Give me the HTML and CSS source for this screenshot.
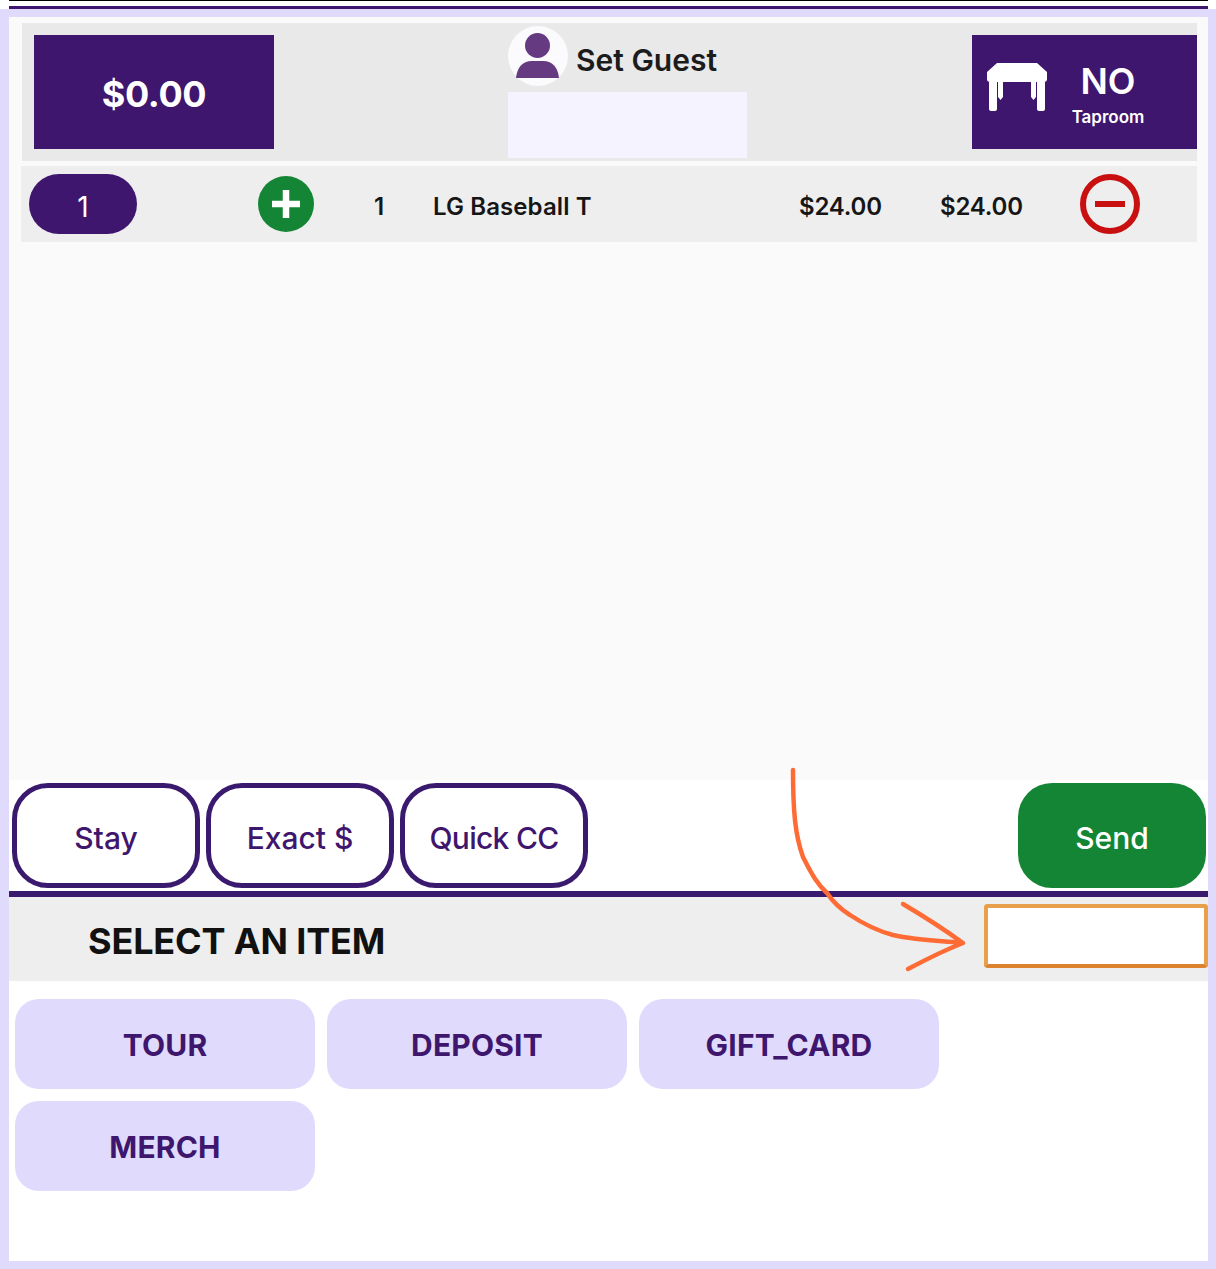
FILE: index.html
```html
<!DOCTYPE html>
<html lang="en">
<head>
<meta charset="utf-8">
<title>Order</title>
<link rel="stylesheet" href="styles.css">
</head>
<body>
<div class="top-strip"><div class="hair"></div><div class="rule"></div></div>
<main class="frame">
  <section class="order">
    <header class="head">
      <div class="total">$0.00</div>
      <div class="guest">
        <div class="guest-top">
          <svg class="avatar" viewBox="0 0 60 60"><circle cx="30" cy="30" r="30" fill="#fbfafc"/><ellipse cx="29.5" cy="19.5" rx="12.5" ry="12.5" fill="#653a80"/><path d="M8 52C9 42 14 35 24 35h11c10 0 15 7 16 17z" fill="#653a80"/></svg>
          <span class="guest-label">Set Guest</span>
        </div>
        <div class="guest-input"></div>
      </div>
      <div class="table-box">
        <svg class="table-icon" viewBox="0 0 60 48"><path d="M10 0h40l10 9v7q0 3-3 3H3q-3 0-3-3V9z" fill="#fff"/><path d="M2 19h8v27a2 2 0 0 1-2 2H4a2 2 0 0 1-2-2zM50 19h8v27a2 2 0 0 1-2 2h-4a2 2 0 0 1-2-2z" fill="#fff"/><path d="M11 19h5v15l-2.5 3-2.5-3zM44 19h5v15l-2.5 3-2.5-3z" fill="#fff"/></svg>
        <div class="table-text"><div class="table-no">NO</div><div class="table-room">Taproom</div></div>
      </div>
    </header>
    <div class="line">
      <div class="qty-pill">1</div>
      <svg class="plus" viewBox="0 0 56 56"><circle cx="28" cy="28" r="28" fill="#148534"/><path d="M28 14v28M14 28h28" stroke="#fff" stroke-width="6.5"/></svg>
      <span class="cell">1</span>
      <span class="cell">LG Baseball T</span>
      <span class="cell cell-money">$24.00</span>
      <span class="cell cell-money">$24.00</span>
      <svg class="minus" viewBox="0 0 60 60"><circle cx="30" cy="30" r="27" fill="none" stroke="#c81010" stroke-width="6"/><path d="M15 30h30" stroke="#c81010" stroke-width="6"/></svg>
    </div>
  </section>
  <div class="actions">
    <button class="btn-outline">Stay</button>
    <button class="btn-outline">Exact $</button>
    <button class="btn-outline btn-tight">Quick CC</button>
    <button class="btn-send">Send</button>
  </div>
  <div class="select-bar">
    <h1 class="select-title">SELECT AN ITEM</h1>
    <div class="search"></div>
  </div>
  <div class="cats">
    <button class="cat">TOUR</button>
    <button class="cat">DEPOSIT</button>
    <button class="cat">GIFT_CARD</button>
    <button class="cat">MERCH</button>
  </div>
</main>
<svg class="annotation" viewBox="0 0 1216 1269"><path d="M793 770C793 810 795 835 803 857C812 875 818 885 827 893C835 905 842 910 850 915C865 925 878 931 893 935C915 940 940 941 963 943M903 904C925 917 945 930 963 943C945 950 925 960 908 969" fill="none" stroke="#ff6b35" stroke-width="4.5" stroke-linecap="round" stroke-linejoin="round"/></svg>
</body>
</html>
```
FILE: styles.css
```css
* { box-sizing: border-box; }
html, body { margin: 0; }
body {
  width: 1216px;
  height: 1269px;
  position: relative;
  overflow: hidden;
  background: #e0dbfd;
  font-family: Inter, "Liberation Sans", sans-serif;
  color: #111;
}
button { font-family: inherit; cursor: pointer; }

.top-strip { height: 9px; background: #fff; padding: 0 8px 0 9px; display: flex; flex-direction: column; }
.hair { height: 1px; background: #000; margin-bottom: 5px; }
.rule { height: 3px; background: #3f166d; }

.frame { margin: 8px 8px 8px 9px; height: 1244px; background: #fff; }

.order { height: 763px; background: #fafafa; padding: 6px 11px 0 13px; }
.head { height: 138px; padding: 3px 0 3px 12px; background: #e9e9e9; display: flex; justify-content: space-between; }
.total {
  width: 240px; height: 114px; margin-top: 9px; padding-top: 4px;
  background: #3f166d; color: #fff;
  display: flex; align-items: center; justify-content: center;
  font-size: 36px; font-weight: 700; letter-spacing: -0.4px;
}
.guest { width: 239px; margin-left: 9px; display: flex; flex-direction: column; gap: 6px; }
.guest-top { display: flex; align-items: center; gap: 8px; height: 60px; }
.avatar { width: 60px; height: 60px; flex: none; }
.guest-label { font-size: 30px; font-weight: 600; color: #1c1c1c; white-space: nowrap; padding-top: 8px; }
.guest-input { height: 66px; background: #f5f3ff; }
.table-box {
  width: 225px; height: 114px; margin-top: 9px; padding-left: 15px;
  background: #3f166d; color: #fff;
  display: flex; align-items: center;
}
.table-icon { width: 60px; height: 48px; flex: none; margin-top: -10px; }
.table-text { width: 122px; padding-top: 4px; text-align: center; font-weight: 600; }
.table-no { font-size: 36px; line-height: 46px; }
.table-room { font-size: 17px; line-height: 26px; }

.line {
  height: 76px; margin: 5px 0 0 -1px; padding-left: 8px;
  background: #eee;
  display: grid; grid-template-columns: 229px 116px 59px 366px 141px 140px 60px; align-items: center;
}
.qty-pill {
  width: 108px; height: 60px; padding-top: 5px; border-radius: 30px;
  background: #3f166d; color: #fff;
  display: flex; align-items: center; justify-content: center;
  font-size: 28px;
}
.plus { width: 56px; height: 56px; }
.minus { width: 60px; height: 60px; }
.cell { padding-top: 4px; font-size: 24px; font-weight: 600; letter-spacing: 0.1px; color: #161616; white-space: nowrap; }
.cell-money { letter-spacing: -0.2px; }

.actions { height: 111px; padding: 3px 2px 3px 3px; display: flex; gap: 6px; background: #fff; }
.btn-outline {
  width: 188px; height: 105px; padding: 4px 0 0;
  border: 5px solid #3a1a6e; border-radius: 36px;
  background: #fff; color: #3f166d;
  font-size: 30px; font-weight: 500;
}
.btn-tight { letter-spacing: -0.7px; }
.btn-send {
  width: 188px; height: 105px; margin-left: auto; padding: 4px 0 0;
  border: 0; border-radius: 34px;
  background: #148534; color: #fff;
  font-size: 30px; font-weight: 500;
}

.select-bar {
  height: 90px; border-top: 6px solid #3a1a6e;
  background: #eee;
  display: flex; align-items: center; justify-content: space-between;
  padding-left: 79px;
}
.select-title { margin: 4px 0 0; font-size: 36px; font-weight: 700; letter-spacing: -0.15px; color: #111; }
.search {
  width: 224px; height: 64px; margin-top: -6px;
  background: #fff;
  border: 4px solid #e9a04b; border-bottom-color: #dd8330;
  border-radius: 4px;
}

.cats { display: grid; grid-template-columns: repeat(3, 300px); gap: 12px; padding: 18px 6px 0; }
.cat {
  height: 90px; padding: 2px 0 0;
  border: 0; border-radius: 24px;
  background: #e0dbfd; color: #3f166d;
  font-size: 30px; font-weight: 700; letter-spacing: 0.2px;
}

.annotation { position: absolute; left: 0; top: 0; width: 1216px; height: 1269px; pointer-events: none; }
```
